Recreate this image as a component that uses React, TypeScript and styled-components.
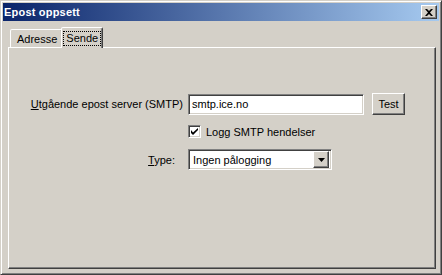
import React from 'react';
import styled, { createGlobalStyle } from 'styled-components';

const Global = createGlobalStyle`
  html,body{margin:0;padding:0;background:#d4d0c8}
  *{box-sizing:border-box}
`;

const Win = styled.div`width:442px;height:275px;background:#d4d0c8;border:1px solid;border-color:#d4d0c8 #404040 #404040 #d4d0c8;box-shadow:inset 1px 1px #fff,inset -1px -1px #808080;padding:2px;display:flex;flex-direction:column;font-family:"Liberation Sans",Arial,sans-serif;font-size:11px;color:#000`;
const TitleBar = styled.div`height:18px;background:linear-gradient(to right,#0a246a,#a6caf0);display:flex;align-items:center;padding:0 2px 0 1px`;
const Title = styled.span`flex:1;color:#fff;font-weight:bold;font-size:11px;letter-spacing:0.2px`;
const RaisedBtn = styled.div`border:1px solid;border-color:#fff #404040 #404040 #fff;box-shadow:inset -1px -1px #808080,inset 1px 1px #d4d0c8;background:#d4d0c8;display:flex;align-items:center;justify-content:center`;
const CloseBtn = styled(RaisedBtn)`width:16px;height:14px`;
const Body = styled.div`flex:1;display:flex;flex-direction:column;padding:0 3px 3px 5px`;
const TabStrip = styled.div`height:26px;display:flex;align-items:flex-end;padding-left:2px;position:relative;z-index:1`;
const Tab = styled.div<{ active?: boolean }>`height:${({active})=>active?21:18}px;padding:${({active})=>active?'3px 2px 0 2px':'2px 3px 0 4px'};margin-bottom:${({active})=>active?-1:0}px;margin-left:${({active})=>active?-2:0}px;background:#d4d0c8;border:1px solid;border-bottom:none;border-color:#fff #404040 transparent #fff;border-radius:2px 2px 0 0;box-shadow:inset -1px 0 #808080;display:flex;align-items:flex-start`;
const TabLabel = styled.span<{ focus?: boolean }>`font-size:11px;line-height:13px;padding:0 2px;outline:${({focus})=>focus?'1px dotted #000':'none'};margin-top:1px`;
const Panel = styled.div`flex:1;border:1px solid;border-color:#fff #404040 #404040 #fff;box-shadow:inset -1px -1px #808080;padding-top:45px;display:flex;flex-direction:column`;
const Row = styled.div<{ top?: number }>`display:flex;align-items:center;margin-top:${({top})=>top||0}px`;
const Label = styled.div<{ pad?: number }>`width:174px;text-align:right;padding-right:${({pad})=>pad||0}px;margin-right:5px;white-space:nowrap`;
const U = styled.span`text-decoration:underline;text-underline-offset:1px`;
const Input = styled.div`width:176px;height:21px;background:#fff;border:1px solid;border-color:#808080 #fff #fff #808080;box-shadow:inset 1px 1px #404040,inset -1px -1px #d4d0c8;padding:0 3px;display:flex;align-items:center`;
const TestBtn = styled(RaisedBtn)`width:33px;height:22px;margin-left:8px;font-size:11px`;
const CheckWrap = styled.label`display:flex;align-items:center;margin-left:179px;gap:5px`;
const Check = styled.div`width:13px;height:13px;background:#fff;border:1px solid;border-color:#808080 #fff #fff #808080;box-shadow:inset 1px 1px #404040,inset -1px -1px #d4d0c8;display:flex;align-items:center;justify-content:center`;
const Combo = styled.div`width:144px;height:21px;background:#fff;border:1px solid;border-color:#808080 #fff #fff #808080;box-shadow:inset 1px 1px #404040,inset -1px -1px #d4d0c8;padding:2px 2px 2px 4px;display:flex;align-items:center`;
const ComboText = styled.span`flex:1`;
const ArrowBtn = styled(RaisedBtn)`width:16px;height:17px`;

export default function App() {
  return (
    <Win>
      <Global />
      <TitleBar>
        <Title>Epost oppsett</Title>
        <CloseBtn>
          <svg width="8" height="7" viewBox="0 0 8 7"><path d="M0 0h2l2 2 2-2h2L5 3.5 8 7H6L4 5 2 7H0l3-3.5z" fill="#000" /></svg>
        </CloseBtn>
      </TitleBar>
      <Body>
        <TabStrip>
          <Tab><TabLabel>Adresse</TabLabel></Tab>
          <Tab active><TabLabel focus>Sende</TabLabel></Tab>
        </TabStrip>
        <Panel>
          <Row>
            <Label><U>U</U>tgående epost server (SMTP)</Label>
            <Input>smtp.ice.no</Input>
            <TestBtn>Test</TestBtn>
          </Row>
          <Row top={10}>
            <CheckWrap>
              <Check>
                <svg width="7" height="7" viewBox="0 0 7 7"><path d="M0 2v3l2 2 5-5V-0L2 4.5z" fill="#000" /></svg>
              </Check>
              Logg SMTP hendelser
            </CheckWrap>
          </Row>
          <Row top={11}>
            <Label pad={8}><U>T</U>ype:</Label>
            <Combo>
              <ComboText>Ingen pålogging</ComboText>
              <ArrowBtn>
                <svg width="7" height="4" viewBox="0 0 7 4"><path d="M0 0h7L3.5 4z" fill="#000" /></svg>
              </ArrowBtn>
            </Combo>
          </Row>
        </Panel>
      </Body>
    </Win>
  );
}
